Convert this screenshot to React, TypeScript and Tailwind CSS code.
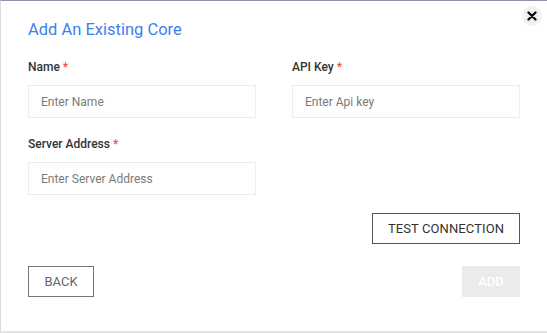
export default function App() {
  return (
    <div
      className="relative w-[547px] h-[333px] bg-white border-t border-t-[#8c93a7] border-l border-l-[#dcdcdc] border-b-2 border-b-[#e3e3e3] overflow-hidden"
      style={{ fontFamily: "Roboto, 'Liberation Sans', sans-serif" }}
    >
      {/* Close */}
      <button
        aria-label="Close"
        className="absolute top-[5px] right-[5px] w-[20px] h-[20px] rounded-full bg-[#f1f1f1] flex items-center justify-center"
      >
        <svg width="10" height="10" viewBox="0 0 10 10">
          <path
            d="M1.5 1.5 L8.5 8.5 M8.5 1.5 L1.5 8.5"
            stroke="#111"
            strokeWidth="2.4"
            strokeLinecap="round"
          />
        </svg>
      </button>

      <div className="pl-[27px] pr-[27px] pt-[17px]">
        <h2 className="text-[16.5px] leading-[24px] text-[#3d7ff0] font-normal">
          Add An Existing Core
        </h2>

        <div className="grid grid-cols-[228px_228px] gap-x-[36px] mt-[16px]">
          <div className="flex flex-col">
            <label className="text-[12px] leading-[18px] font-medium text-[#333]">
              Name <span className="text-[#e5534b]">*</span>
            </label>
            <input
              placeholder="Enter Name"
              className="mt-[9px] h-[33px] border border-[#ececec] px-[12px] text-[12px] text-[#333] placeholder:text-[#7a7a7a] outline-none"
            />
          </div>
          <div className="flex flex-col">
            <label className="text-[12px] leading-[18px] font-medium text-[#333]">
              API Key <span className="text-[#e5534b]">*</span>
            </label>
            <input
              placeholder="Enter Api key"
              className="mt-[9px] h-[33px] border border-[#ececec] px-[12px] text-[12px] text-[#333] placeholder:text-[#7a7a7a] outline-none"
            />
          </div>
          <div className="flex flex-col mt-[17px]">
            <label className="text-[12px] leading-[18px] font-medium text-[#333]">
              Server Address <span className="text-[#e5534b]">*</span>
            </label>
            <input
              placeholder="Enter Server Address"
              className="mt-[9px] h-[33px] border border-[#ececec] px-[12px] text-[12px] text-[#333] placeholder:text-[#7a7a7a] outline-none"
            />
          </div>
        </div>

        <div className="flex justify-end w-[492px] mt-[18px]">
          <button className="h-[31px] w-[148px] border border-[#555] text-[13px] text-[#333] tracking-[0.1px]">
            TEST CONNECTION
          </button>
        </div>

        <div className="flex justify-between w-[492px] mt-[22px]">
          <button className="h-[31px] w-[66px] border-[1.5px] border-[#6f7a7a] text-[13px] text-[#666]">
            BACK
          </button>
          <button className="h-[31px] w-[58px] bg-[#ebebeb] text-[13px] text-white font-medium">
            ADD
          </button>
        </div>
      </div>
    </div>
  );
}
